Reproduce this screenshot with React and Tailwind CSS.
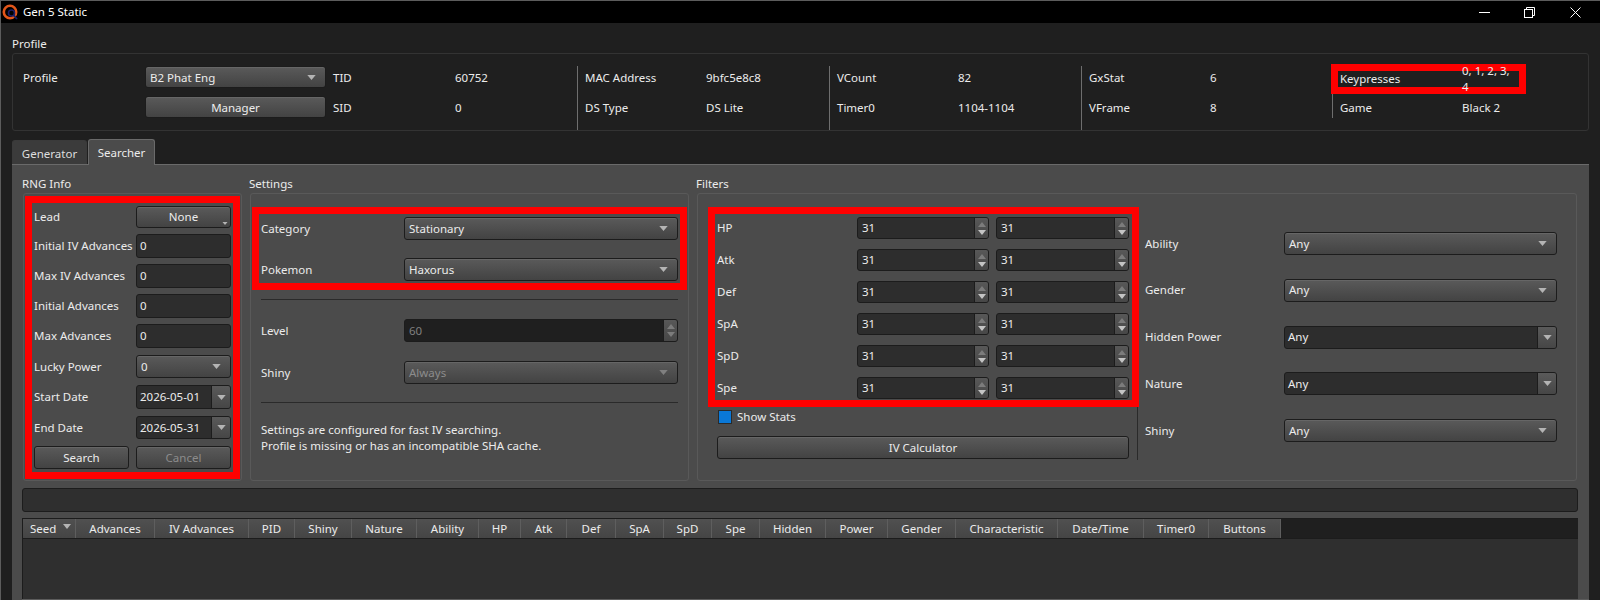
import React from "react";

const FONT = "[font-family:'Noto_Sans',Roboto,sans-serif]";

const btn = "rounded-[3px] border border-[#1c1c1c] bg-gradient-to-b from-[#5a5a5a] to-[#434343] shadow-[inset_0_1px_0_#666]";

const Arrow = ({ dir = "down", color = "#b4b4b4", w = 9, h = 5 }) => (
  <svg width={w} height={h} viewBox="0 0 10 6" className="shrink-0">
    <polygon points={dir === "down" ? "0,0 10,0 5,6" : "0,6 10,6 5,0"} fill={color} />
  </svg>
);

const Combo = ({ value, disabled, className = "" }) => (
  <div className={`${btn} flex items-center justify-between pl-[4px] pr-[9px] ${disabled ? "text-[#8c8c8c]" : ""} ${className}`}>
    <span>{value}</span>
    <Arrow color={disabled ? "#808080" : "#b4b4b4"} />
  </div>
);

const EditCombo = ({ value, className = "" }) => (
  <div className={`flex rounded-[3px] border border-[#1c1c1c] bg-[#2d2d2d] overflow-hidden ${className}`}>
    <span className="flex-1 flex items-center pl-[3px]">{value}</span>
    <span className="w-[19px] flex items-center justify-center border-l border-[#1c1c1c] bg-gradient-to-b from-[#5a5a5a] to-[#464646]">
      <Arrow />
    </span>
  </div>
);

const Input = ({ value }) => (
  <div className="w-[95px] h-[24px] flex items-center pl-[3px] rounded-[3px] border border-[#1c1c1c] bg-[#2d2d2d]">{value}</div>
);

const Spin = ({ value, disabled, className = "" }) => (
  <div className={`flex rounded-[3px] border border-[#1c1c1c] overflow-hidden ${disabled ? "bg-[#1f1f1f] text-[#7f7f7f]" : "bg-[#2d2d2d]"} ${className}`}>
    <span className="flex-1 flex items-center pl-[4px]">{value}</span>
    <span className="w-[14px] flex flex-col items-center justify-center gap-[3px] border-l border-[#1c1c1c] bg-gradient-to-b from-[#585858] to-[#474747]">
      <Arrow dir="up" color="#7c7c7c" w={8} h={5} />
      <Arrow color={disabled ? "#7c7c7c" : "#c4c4c4"} w={8} h={5} />
    </span>
  </div>
);

const Info = ({ rows, labelW = 120, sep = true, w }) => (
  <div className={`flex flex-col gap-[8px] ${sep ? "border-l border-[#6e6e6e] pl-[7px]" : ""}`} style={{ width: w }}>
    {rows.map(([k, v]) => (
      <div key={k} className="flex items-center h-[22px] pt-[2px]">
        <span className="shrink-0" style={{ width: labelW }}>{k}</span>
        <span>{v}</span>
      </div>
    ))}
  </div>
);

const RED = "border-[7px] border-[#ff0000]";

const rngRows = [
  ["Initial IV Advances", "0"],
  ["Max IV Advances", "0"],
  ["Initial Advances", "0"],
  ["Max Advances", "0"],
];

const stats = ["HP", "Atk", "Def", "SpA", "SpD", "Spe"];

const filters = [
  ["Ability", false],
  ["Gender", false],
  ["Hidden Power", true],
  ["Nature", true],
  ["Shiny", false],
];

const columns = [
  ["Advances", 79], ["IV Advances", 94], ["PID", 46], ["Shiny", 57], ["Nature", 65], ["Ability", 62],
  ["HP", 42], ["Atk", 46], ["Def", 49], ["SpA", 48], ["SpD", 48], ["Spe", 48], ["Hidden", 66],
  ["Power", 62], ["Gender", 68], ["Characteristic", 102], ["Date/Time", 86], ["Timer0", 65], ["Buttons", 72],
];

export default function App() {
  return (
    <div className={`${FONT} w-[1600px] h-[600px] overflow-hidden flex flex-col bg-[#1f1f1f] text-[#ececec] text-[11.5px] leading-[16px] border-t border-l border-[#5c5c5c]`}>
      <div className="h-[22px] shrink-0 bg-black flex items-center text-white">
        <svg width="17" height="17" viewBox="0 0 17 17" className="ml-[1px] shrink-0">
          <circle cx="8" cy="8" r="6.2" fill="none" stroke="#e2561a" strokeWidth="2.6" />
          <circle cx="9.5" cy="9" r="3" fill="none" stroke="#1c1f66" strokeWidth="1.6" />
          <line x1="11.7" y1="11.4" x2="15" y2="15" stroke="#1c1f66" strokeWidth="1.8" />
        </svg>
        <span className="ml-[4px]">Gen 5 Static</span>
        <div className="ml-auto flex items-center text-white">
          <svg width="11" height="11" viewBox="0 0 11 11" className="mr-[34px]"><line x1="0" y1="5.5" x2="11" y2="5.5" stroke="#fff" /></svg>
          <svg width="11" height="11" viewBox="0 0 11 11" className="mr-[35px]">
            <rect x="0.5" y="2.5" width="8" height="8" fill="none" stroke="#fff" />
            <path d="M2.5 2.5V0.5H10.5V8.5H8.5" fill="none" stroke="#fff" />
          </svg>
          <svg width="11" height="11" viewBox="0 0 11 11" className="mr-[19px]"><path d="M0.5 0.5L10.5 10.5M10.5 0.5L0.5 10.5" stroke="#fff" /></svg>
        </div>
      </div>

      <div className="flex-1 flex flex-col pl-[11px] pr-[11px] min-h-0">
        <div className="pt-[13px] h-[30px] shrink-0">Profile</div>

        <div className="h-[78px] shrink-0 rounded-[3px] border border-[#333333] flex pt-[12px] pl-[10px]">
          <div className="w-[122px] pt-[4px]">Profile</div>
          <div className="w-[181px] flex flex-col gap-[8px]">
            <Combo value="B2 Phat Eng" className="h-[22px] pt-[1px]" />
            <div className={`${btn} h-[22px] flex items-center justify-center pt-[1px]`}>Manager</div>
          </div>
          <div className="pl-[7px]">
            <Info sep={false} w={244} labelW={122} rows={[["TID", "60752"], ["SID", "0"]]} />
          </div>
          <Info w={252} labelW={121} rows={[["MAC Address", "9bfc5e8c8"], ["DS Type", "DS Lite"]]} />
          <Info w={252} labelW={121} rows={[["VCount", "82"], ["Timer0", "1104-1104"]]} />
          <Info w={251} labelW={121} rows={[["GxStat", "6"], ["VFrame", "8"]]} />
          <div className="flex flex-col -ml-[1px]">
            <div className={`${RED} w-[195px] h-[30px] -mt-[2px] flex items-center pl-[2px] bg-[#1f1f1f]`}>
              <span className="w-[122px] shrink-0">Keypresses</span>
              <span>0, 1, 2, 3, 4</span>
            </div>
            <div className="ml-[1px] h-[24px] border-l border-[#6e6e6e] pl-[7px] flex items-center pt-[4px]">
              <span className="w-[122px] shrink-0">Game</span>
              <span>Black 2</span>
            </div>
          </div>
        </div>

        <div className="mt-[7px] h-[26px] shrink-0 flex items-end">
          <div className="w-[75px] h-[24px] flex items-center justify-center rounded-t-[3px] border border-b-0 border-[#3a3a3a] bg-[#3b3b3b] text-[#dedede] pt-[2px]">Generator</div>
          <div className="ml-[1px] w-[67px] h-[26px] flex items-center justify-center rounded-t-[3px] border border-b-0 border-[#6a6a6a] bg-[#4b4b4b] relative z-10 -mb-px">Searcher</div>
        </div>

        <div className="flex-1 min-h-0 bg-[#4b4b4b] border-t border-[#6a6a6a] pl-[10px] flex flex-col">
          <div className="flex gap-[7px] h-[316px] shrink-0 pt-[11px]">
            <div className="w-[220px] flex flex-col">
              <div className="h-[17px] shrink-0">RNG Info</div>
              <div className="ml-[1px] w-[219px] flex-1 border border-[#595959] rounded-[3px] pl-[1px] pt-[2px]">
                <div className={`${RED} w-[215px] h-[283px] pl-[2px] pr-[2px] pt-[3px] flex flex-col gap-[6px]`}>
                  <div className="flex items-center h-[22px]">
                    <span className="w-[102px] shrink-0">Lead</span>
                    <div className={`${btn} relative w-[95px] h-[22px] flex items-center justify-center`}>
                      None
                      <span className="absolute right-[2px] bottom-[2px] flex"><Arrow w={6} h={3} /></span>
                    </div>
                  </div>
                  {rngRows.map(([label, value]) => (
                    <div key={label} className="flex items-center h-[24px]">
                      <span className="w-[102px] shrink-0">{label}</span>
                      <Input value={value} />
                    </div>
                  ))}
                  <div className="flex items-center h-[23px] mt-[1px]">
                    <span className="w-[102px] shrink-0">Lucky Power</span>
                    <Combo value="0" className="w-[95px] h-[23px]" />
                  </div>
                  <div className="flex items-center h-[24px] mt-[1px]">
                    <span className="w-[102px] shrink-0">Start Date</span>
                    <EditCombo value="2026-05-01" className="w-[95px] h-[24px]" />
                  </div>
                  <div className="flex items-center h-[23px] mt-[1px]">
                    <span className="w-[102px] shrink-0">End Date</span>
                    <EditCombo value="2026-05-31" className="w-[95px] h-[23px]" />
                  </div>
                  <div className="flex gap-[7px] h-[23px] mt-[1px]">
                    <div className={`${btn} w-[95px] flex items-center justify-center`}>Search</div>
                    <div className={`${btn} w-[95px] flex items-center justify-center text-[#8c8c8c]`}>Cancel</div>
                  </div>
                </div>
              </div>
            </div>

            <div className="w-[440px] flex flex-col">
              <div className="h-[17px] shrink-0">Settings</div>
              <div className="ml-[1px] w-[439px] flex-1 border border-[#595959] rounded-[3px] pl-[1px] pt-[13px]">
                <div className={`${RED} w-[435px] h-[83px] pl-[2px] pr-[2px] pt-[3px] flex flex-col gap-[18px]`}>
                  <div className="flex items-center h-[23px]">
                    <span className="w-[143px] shrink-0">Category</span>
                    <Combo value="Stationary" className="flex-1 h-[23px]" />
                  </div>
                  <div className="flex items-center h-[23px]">
                    <span className="w-[143px] shrink-0">Pokemon</span>
                    <Combo value="Haxorus" className="flex-1 h-[23px]" />
                  </div>
                </div>
                <div className="ml-[9px] w-[417px]">
                  <div className="mt-[9px] h-px bg-[#2a2a2a]" />
                  <div className="mt-[19px] flex items-center h-[23px]">
                    <span className="w-[143px] shrink-0">Level</span>
                    <Spin value="60" disabled className="flex-1 h-[23px]" />
                  </div>
                  <div className="mt-[19px] flex items-center h-[23px]">
                    <span className="w-[143px] shrink-0">Shiny</span>
                    <Combo value="Always" disabled className="flex-1 h-[23px]" />
                  </div>
                  <div className="mt-[18px] h-px bg-[#2a2a2a]" />
                  <p className="mt-[19px]">Settings are configured for fast IV searching.</p>
                  <p>Profile is missing or has an incompatible SHA cache.</p>
                </div>
              </div>
            </div>

            <div className="w-[881px] flex flex-col">
              <div className="h-[17px] shrink-0">Filters</div>
              <div className="ml-[1px] w-[880px] flex-1 border border-[#595959] rounded-[3px] pl-[10px] pt-[13px] flex">
                <div className="w-[431px] shrink-0">
                  <div className={`${RED} w-[431px] h-[200px] pl-[2px] pr-[3px] pt-[3px] flex flex-col gap-[10px]`}>
                    {stats.map((s) => (
                      <div key={s} className="flex items-center h-[22px]">
                        <span className="w-[140px] shrink-0">{s}</span>
                        <Spin value="31" className="w-[132px] h-[22px]" />
                        <Spin value="31" className="ml-[7px] w-[133px] h-[22px]" />
                      </div>
                    ))}
                  </div>
                  <div className="w-[430px] h-[53px] border-r border-[#2a2a2a] pl-[9px] pr-[8px] pt-[3px]">
                    <div className="flex items-center h-[14px] gap-[5px] pl-[1px]">
                      <span className="w-[14px] h-[14px] bg-[#0a78d7] border border-[#2a2a2a]" />
                      <span>Show Stats</span>
                    </div>
                    <div className={`${btn} mt-[12px] h-[23px] flex items-center justify-center`}>IV Calculator</div>
                  </div>
                </div>
                <div className="pl-[6px] pt-[25px] flex flex-col gap-[23.75px]">
                  {filters.map(([label, editable]) => (
                    <div key={label} className="flex items-center h-[23px]">
                      <span className="w-[139px] shrink-0">{label}</span>
                      {editable ? (
                        <EditCombo value="Any" className="w-[273px] h-[23px]" />
                      ) : (
                        <Combo value="Any" className="w-[273px] h-[23px]" />
                      )}
                    </div>
                  ))}
                </div>
              </div>
            </div>
          </div>

          <div className="mt-[7px] w-[1556px] h-[24px] shrink-0 rounded-[3px] border border-[#1c1c1c] bg-[#2f2f2f]" />

          <div className="mt-[6px] w-[1556px] flex-1 min-h-0 border-t border-l border-[#1c1c1c] bg-[#2f2f2f] flex flex-col">
            <div className="h-[20px] shrink-0 flex bg-[#1f1f1f] border-b border-[#1c1c1c]">
              <div className="w-[53px] shrink-0 flex items-center justify-between pl-[7px] pr-[4px] border-r border-[#5e5e5e] bg-gradient-to-b from-[#505050] to-[#454545]">
                <span>Seed</span>
                <span className="-mt-[5px] flex"><Arrow w={8} h={5} /></span>
              </div>
              {columns.map(([name, w]) => (
                <div key={name} className="shrink-0 flex items-center justify-center border-r border-[#5e5e5e] bg-gradient-to-b from-[#505050] to-[#454545]" style={{ width: w }}>
                  {name}
                </div>
              ))}
            </div>
            <div className="flex-1" />
          </div>
          <div className="h-px shrink-0 bg-[#5c5c5c]" />
        </div>
      </div>
    </div>
  );
}
